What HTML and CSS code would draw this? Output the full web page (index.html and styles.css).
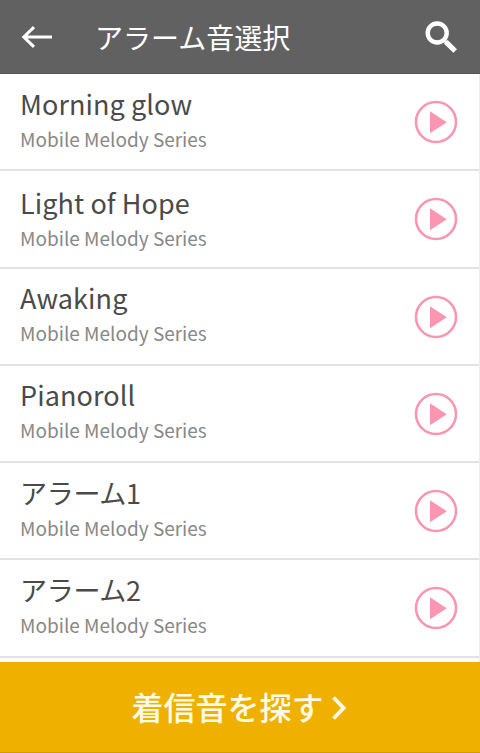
FILE: index.html
```html
<!DOCTYPE html>
<html lang="ja">
<head>
<meta charset="utf-8">
<title>アラーム音選択</title>
<link rel="stylesheet" href="styles.css">
</head>
<body>
<svg class="defs" width="0" height="0" aria-hidden="true">
  <symbol id="play" viewBox="0 0 44 44">
    <circle cx="22" cy="22" r="20" fill="none" stroke="#fa96b2" stroke-width="2.6"/>
    <path d="M16 11.2V33.2L32.8 22.2Z" fill="#fa96b2"/>
  </symbol>
</svg>
<div class="screen">
  <header class="header">
    <svg class="back" viewBox="0 0 32 24"><path d="M31 12H2.5M13 2.2L2.8 12L13 21.8" fill="none" stroke="#fff" stroke-width="3"/></svg>
    <h1 class="heading">アラーム音選択</h1>
    <svg class="search" viewBox="0 0 34 34"><circle cx="13.2" cy="13" r="9.5" fill="none" stroke="#fff" stroke-width="4.4"/><path d="M19 19L24 24" stroke="#fff" stroke-width="3"/><path d="M21.8 21.8L31.2 31" stroke="#fff" stroke-width="5.2"/></svg>
  </header>
  <ul class="list">
    <li class="row"><div class="text"><div class="name">Morning glow</div><div class="series">Mobile Melody Series</div></div><svg class="play"><use href="#play"/></svg></li>
    <li class="row row-low"><div class="text"><div class="name">Light of Hope</div><div class="series">Mobile Melody Series</div></div><svg class="play"><use href="#play"/></svg></li>
    <li class="row row-high"><div class="text"><div class="name">Awaking</div><div class="series">Mobile Melody Series</div></div><svg class="play"><use href="#play"/></svg></li>
    <li class="row row-high"><div class="text"><div class="name">Pianoroll</div><div class="series">Mobile Melody Series</div></div><svg class="play"><use href="#play"/></svg></li>
    <li class="row"><div class="text"><div class="name kana">アラーム1</div><div class="series">Mobile Melody Series</div></div><svg class="play"><use href="#play"/></svg></li>
    <li class="row"><div class="text"><div class="name kana">アラーム2</div><div class="series">Mobile Melody Series</div></div><svg class="play"><use href="#play"/></svg></li>
  </ul>
  <footer class="find">
    <span>着信音を探す</span>
    <svg class="chevron" viewBox="0 0 14 24"><path d="M1.5 1.5L11.5 12L1.5 22.5" fill="none" stroke="#fffbe8" stroke-width="3.8"/></svg>
  </footer>
</div>
</body>
</html>
```
FILE: styles.css
```css
* { box-sizing: border-box; }
body {
  margin: 0;
  background: #fff;
  font-family: "Noto Sans CJK JP", sans-serif;
}
.defs { display: block; }
.screen {
  display: flex;
  flex-direction: column;
  width: 480px;
  height: 753px;
  overflow: hidden;
}
.header {
  display: flex;
  align-items: center;
  flex: none;
  height: 74px;
  padding: 0 22px 0 21px;
  background: #616161;
  border-bottom: 1px solid #555;
}
.back { width: 32px; height: 24px; }
.heading {
  flex: 1;
  margin: 0 0 0 42px;
  font-size: 28px;
  line-height: 40px;
  font-weight: 400;
  color: #fff;
}
.search { width: 34px; height: 34px; }
.list {
  flex: none;
  height: 588px;
  margin: 0;
  padding: 0;
  list-style: none;
  border-right: 1px solid #eeeeea;
}
.row {
  display: flex;
  justify-content: space-between;
  height: 97.3px;
  padding: 9px 21px 0 20px;
  border-bottom: 2px solid #e2e2e2;
}
.row-low { padding-top: 11px; }
.row-high { padding-top: 8px; }
.name {
  font-size: 27px;
  line-height: 41px;
  letter-spacing: 0.08px;
  color: #4a4a4a;
}
.kana { letter-spacing: -0.3px; }
.series {
  font-size: 19px;
  line-height: 30px;
  color: #888;
}
.play { width: 44px; height: 44px; margin-top: 17px; }
.row-low .play { margin-top: 15px; }
.row-high .play { margin-top: 18px; }
.find {
  display: flex;
  align-items: center;
  justify-content: center;
  gap: 8px;
  height: 91px;
  padding-right: 3px;
  background: #f0b000;
  border-bottom: 1px solid #d29a00;
  font-size: 32px;
  font-weight: 500;
  color: #fffbe8;
}
.find span { padding-bottom: 3px; }
.chevron { width: 14px; height: 24px; margin-top: 2px; }
```
